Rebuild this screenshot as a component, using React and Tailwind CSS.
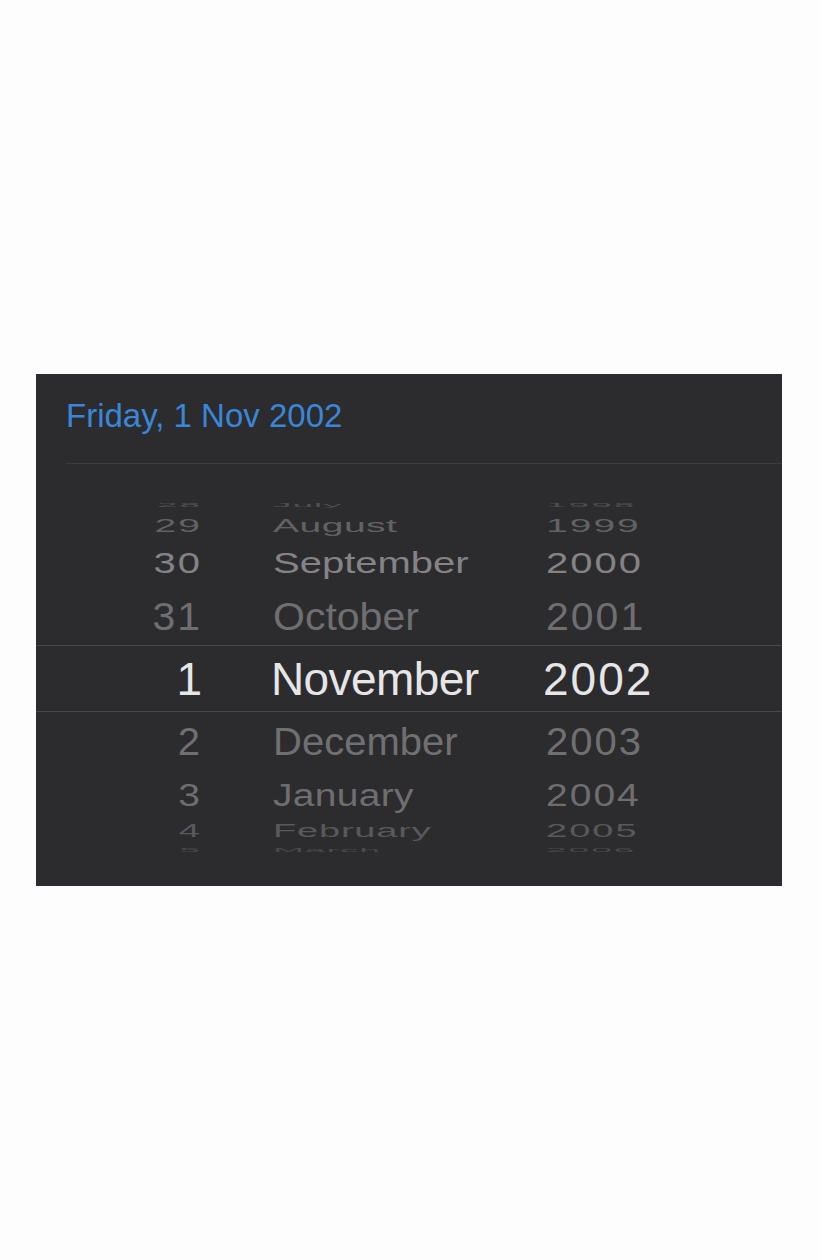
import React from "react";

// Wheel rows above and below the selection band. Each row is squashed
// vertically to suggest the curve of the drum.
const above = [
  { d: "28", m: "July", y: "1998", h: "h-[16px]", t: "text-[37px] scale-y-[0.15] text-[#4e4e50]", k: "tracking-[1px]" },
  { d: "29", m: "August", y: "1999", h: "h-[24px]", t: "text-[39px] scale-y-[0.48] text-[#626264]", k: "tracking-[0.5px]" },
  { d: "30", m: "September", y: "2000", h: "h-[52px]", t: "text-[40px] scale-y-[0.72] text-[#848486]", k: "tracking-[0px]" },
  { d: "31", m: "October", y: "2001", h: "h-[56px]", t: "text-[41px] scale-y-[0.93] text-[#6f6f71]", k: "tracking-[0px]" },
];

const below = [
  { d: "2", m: "December", y: "2003", h: "h-[58px]", t: "text-[40px] scale-y-[0.97] text-[#707072]", k: "tracking-[0px]" },
  { d: "3", m: "January", y: "2004", h: "h-[50px]", t: "text-[39px] scale-y-[0.79] text-[#6e6e70]", k: "tracking-[0.3px]" },
  { d: "4", m: "February", y: "2005", h: "h-[22px]", t: "text-[38px] scale-y-[0.47] text-[#59595b]", k: "tracking-[0.8px]" },
  { d: "5", m: "March", y: "2006", h: "h-[16px]", t: "text-[37px] scale-y-[0.16] text-[#49494b]", k: "tracking-[1px]" },
];

function WheelRow({ row }) {
  return (
    <div className={`flex items-center ${row.h}`}>
      <div className="w-[164px] flex justify-end">
        <span className={`block leading-none tracking-[2px] -mr-[2px] ${row.t}`}>{row.d}</span>
      </div>
      <div className="w-[273px] pl-[73px] box-content flex">
        <span className={`block leading-none whitespace-nowrap ${row.t} ${row.k}`}>{row.m}</span>
      </div>
      <div className="flex">
        <span className={`block leading-none tracking-[2px] ${row.t}`}>{row.y}</span>
      </div>
    </div>
  );
}

export default function App() {
  return (
    <div
      className="min-h-[1260px] bg-[#fdfdfd] pt-[374px]"
      style={{ fontFamily: '"Liberation Sans", Arial, sans-serif' }}
    >
      <div className="ml-[36px] w-[746px] h-[512px] bg-[#2c2c2e] flex flex-col">
        {/* header with the chosen date */}
        <div className="pl-[30px] pt-[22px] h-[89px]">
          <div className="text-[33px] leading-[39px] text-[#3a86d8] tracking-[0px]">
            Friday, 1 Nov 2002
          </div>
        </div>
        <div className="ml-[30px] border-t border-[#3c3c3e]" />

        {/* date wheels */}
        <div className="pt-[33px] flex flex-col">
          {above.map((r) => (
            <WheelRow key={r.m} row={r} />
          ))}

          <div className="h-[67px] border-y border-[#48484a] flex items-center">
            <div className="w-[164px] flex justify-end">
              <span className="block leading-none text-[46px] text-[#e6e6e8] -mr-[2px]">1</span>
            </div>
            <div className="w-[273px] pl-[71px] box-content flex">
              <span className="block leading-none text-[46px] tracking-[-0.6px] text-[#e6e6e8]">
                November
              </span>
            </div>
            <div className="flex">
              <span className="block leading-none text-[46px] tracking-[2px] text-[#e6e6e8] -ml-[1px]">
                2002
              </span>
            </div>
          </div>

          {below.map((r) => (
            <WheelRow key={r.m} row={r} />
          ))}
        </div>
      </div>
    </div>
  );
}
